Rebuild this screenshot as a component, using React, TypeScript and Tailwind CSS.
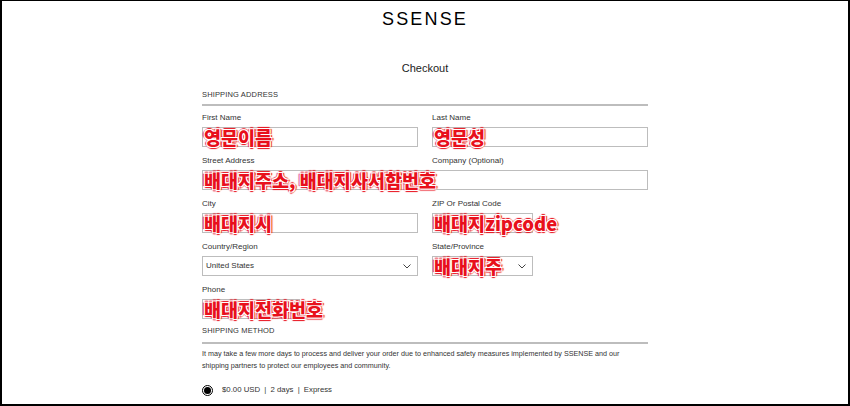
import React from 'react';

const redNote =
  "font-['Noto_Sans_CJK_KR',sans-serif] font-black text-[18.5px] leading-none text-[#e8101c] whitespace-nowrap [text-shadow:0_0_1px_#fff,1px_1px_0_#fff,-1px_-1px_0_#fff,1px_-1px_0_#fff,-1px_1px_0_#fff,0_0_2px_#e8101c,2px_0_1px_#e8101c,-2px_0_1px_#e8101c,0_2px_1px_#e8101c,0_-2px_1px_#e8101c]";

function Field({ label, note, width, children }: { label: string; note?: string; width: string; children?: React.ReactNode }) {
  return (
    <div className="flex flex-col">
      <div className="h-[10px] text-[8px] leading-[10px] text-[#333]">{label}</div>
      <div className={`mt-[4px] h-[20px] border border-[#bdbdbd] flex items-center pl-[1px] ${width}`}>
        {note && <span className={redNote}>{note}</span>}
        {children}
      </div>
    </div>
  );
}

function Chevron() {
  return (
    <svg width="8" height="5" viewBox="0 0 8 5" className="ml-auto mr-[6px]">
      <path d="M0.5 0.5 L4 4 L7.5 0.5" fill="none" stroke="#444" strokeWidth="1" />
    </svg>
  );
}

export default function App() {
  return (
    <div className="w-[850px] h-[406px] bg-white border-t border-l-2 border-r-2 border-b-2 border-black overflow-hidden font-['Liberation_Sans',Arial,sans-serif]">
      {/* Header */}
      <div className="pt-[8px] text-center text-[18px] leading-[20px] tracking-[0.12em] text-black">SSENSE</div>
      <div className="mt-[32px] text-center text-[11px] leading-[14px] text-[#222]">Checkout</div>

      <div className="w-[446px] ml-[200px] mt-[15px]">
        {/* Shipping address */}
        <div className="text-[7.5px] leading-[10px] text-[#333] tracking-[0.02em]">SHIPPING ADDRESS</div>
        <div className="mt-[4px] h-[2px] bg-[#bdbdbd]" />

        <div className="mt-[7px] flex flex-col gap-[9px]">
          <div className="flex gap-[14px]">
            <Field label="First Name" note="영문이름" width="w-[216px]" />
            <Field label="Last Name" note="영문성" width="w-[216px]" />
          </div>
          <div className="flex flex-col">
            <div className="h-[10px] text-[8px] leading-[10px] text-[#333] flex gap-[14px]">
              <span className="w-[216px]">Street Address</span>
              <span>Company (Optional)</span>
            </div>
            <div className="mt-[4px] h-[20px] w-[446px] border border-[#bdbdbd] flex items-center pl-[1px]">
              <span className={redNote}>배대지주소, 배대지사서함번호</span>
            </div>
          </div>
          <div className="flex gap-[14px]">
            <Field label="City" note="배대지시" width="w-[216px]" />
            <Field label="ZIP Or Postal Code" note="배대지zipcode" width="w-[101px]" />
          </div>
          <div className="flex gap-[14px]">
            <Field label="Country/Region" width="w-[216px]">
              <span className="pl-[2px] text-[8px] text-[#333]">United States</span>
              <Chevron />
            </Field>
            <Field label="State/Province" note="배대지주" width="w-[101px]">
              <Chevron />
            </Field>
          </div>
          <Field label="Phone" note="배대지전화번호" width="w-[98px]" />
        </div>

        {/* Shipping method */}
        <div className="mt-[7px] text-[7.5px] leading-[10px] text-[#333] tracking-[0.02em]">SHIPPING METHOD</div>
        <div className="mt-[6px] h-[2px] bg-[#bdbdbd]" />
        <p className="mt-[4px] text-[7.2px] leading-[12px] text-[#333]">
          It may take a few more days to process and deliver your order due to enhanced safety measures implemented by SSENSE and our
          <br />
          shipping partners to protect our employees and community.
        </p>

        <div className="mt-[12px] flex items-center gap-[9px] text-[7.8px] leading-[12px] text-[#333]">
          <span className="w-[11px] h-[11px] rounded-full border border-black flex items-center justify-center">
            <span className="w-[7px] h-[7px] rounded-full bg-black" />
          </span>
          <span>
            $0.00 USD <span className="mx-[2px]">|</span> 2 days <span className="mx-[2px]">|</span> Express
          </span>
        </div>
      </div>
    </div>
  );
}
